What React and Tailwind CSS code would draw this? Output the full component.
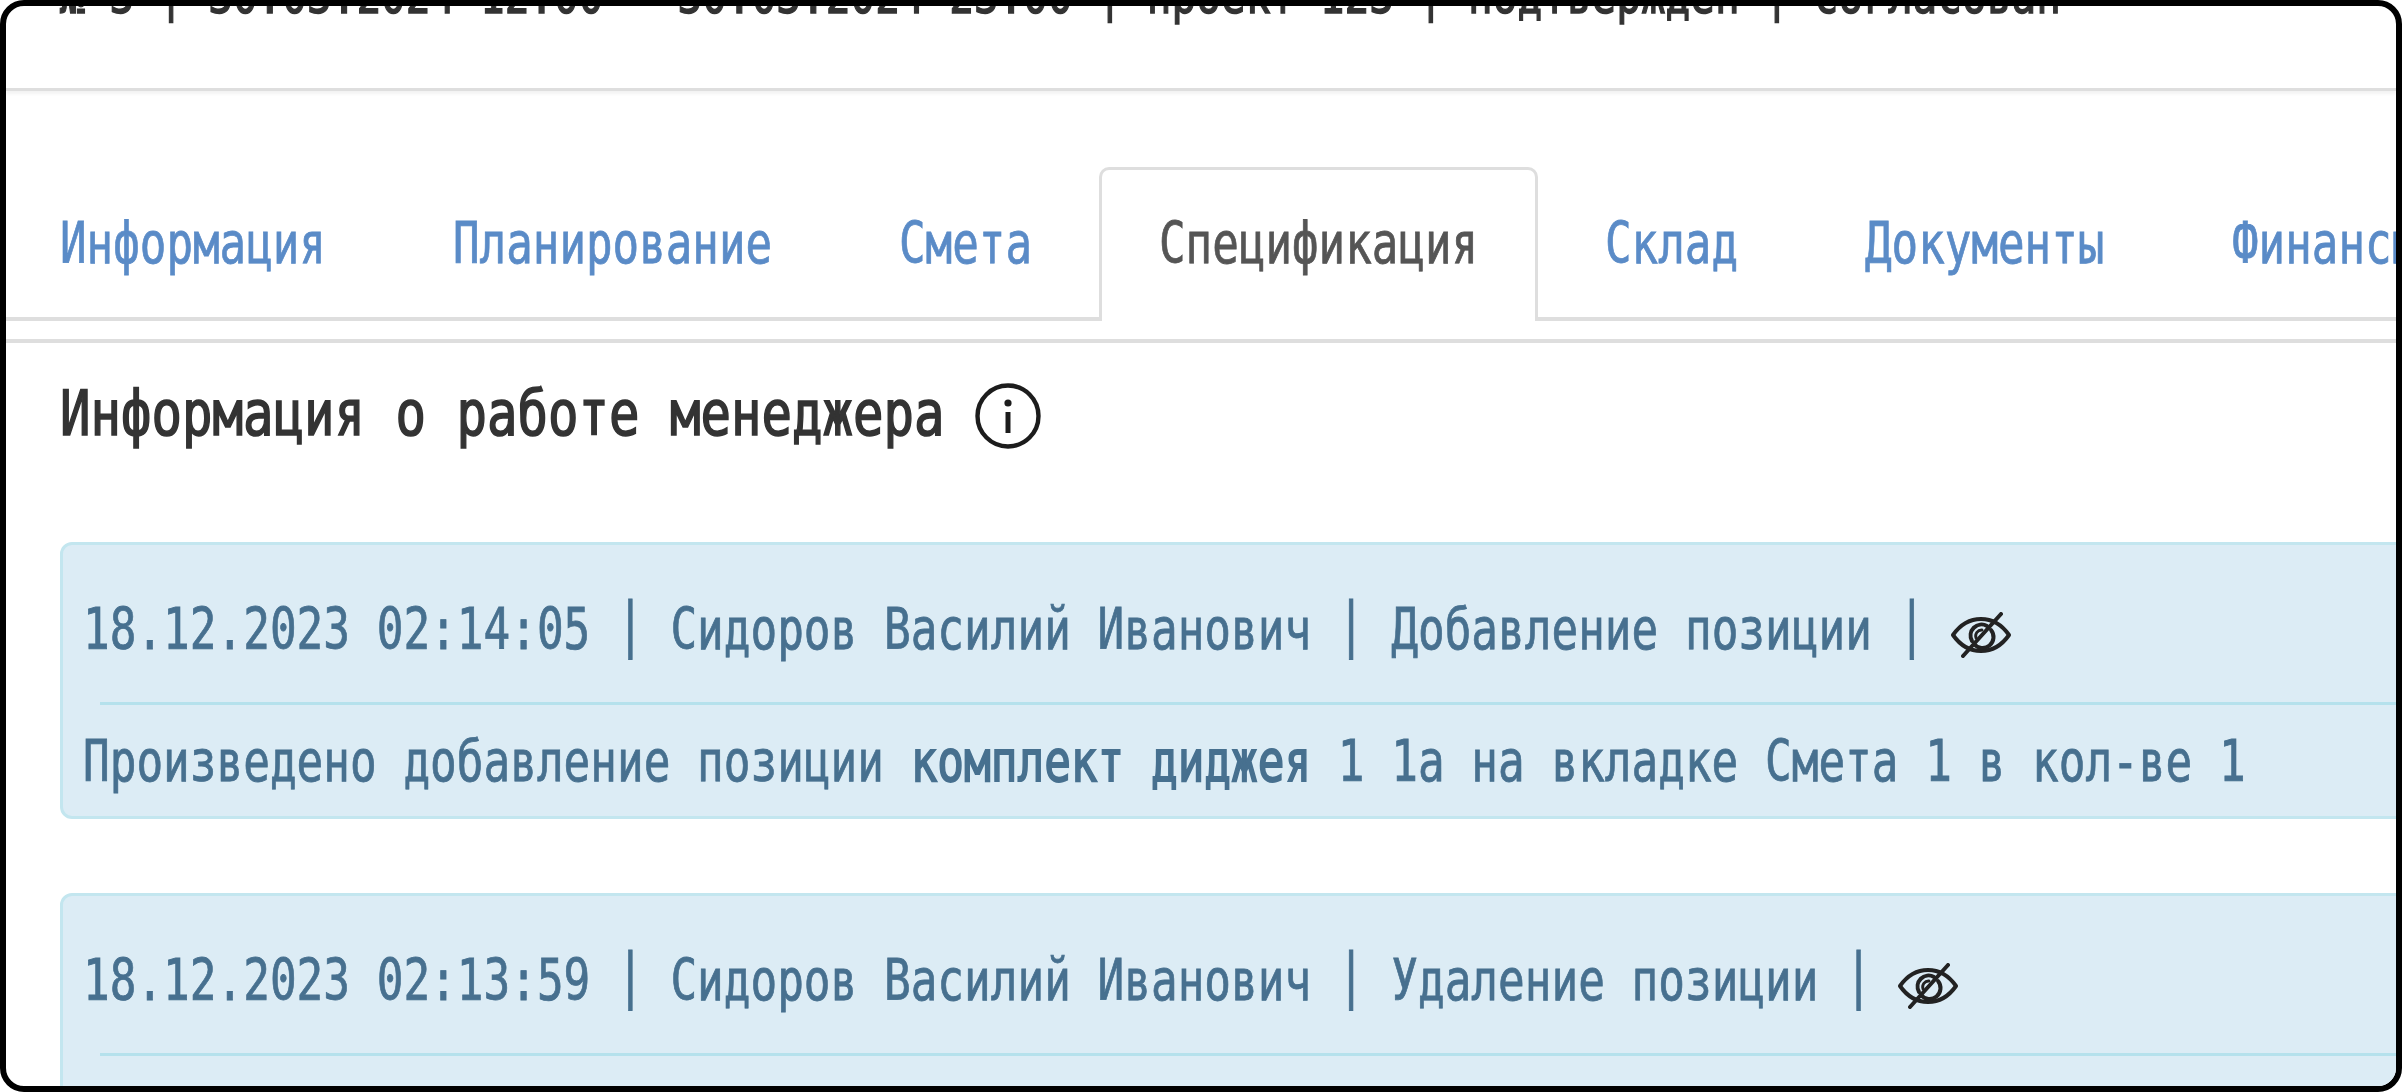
const tabs = ['Информация', 'Планирование', 'Смета', 'Спецификация', 'Склад', 'Документы', 'Финансы'];

const logs = [
  {
    date: '18.12.2023 02:14:05 | Сидоров Василий Иванович | Добавление позиции |',
    before: 'Произведено добавление позиции ',
    bold: 'комплект диджея',
    after: ' 1 1а на вкладке Смета 1 в кол-ве 1',
  },
  {
    // the second card runs off the bottom edge right below its divider
    date: '18.12.2023 02:13:59 | Сидоров Василий Иванович | Удаление позиции |',
  },
];

// the font in the picture is a narrow mono, so DejaVu Mono gets squeezed
// the outer span keeps the real width in the flow
function Narrow({ text, advance, className, children }) {
  return (
    <span className="inline-block shrink-0 whitespace-pre" style={{ width: text.length * advance }}>
      <span className={`inline-block origin-left whitespace-pre ${className}`}>{children || text}</span>
    </span>
  );
}

// the separators sit higher and run a bit longer than DejaVu's pipe
function withBars(text) {
  return text.split('|').map((part, i) => (
    <span key={i}>
      {i > 0 && <span className="inline-block -translate-y-[5px] scale-y-[1.06]">|</span>}
      {part}
    </span>
  ));
}

function InfoIcon() {
  return (
    <svg viewBox="0 0 66 66" className="h-[66px] w-[66px] shrink-0 text-[#1c1c1c]" fill="none" stroke="currentColor">
      <circle cx="33" cy="33" r="30.5" strokeWidth="4.4" />
      <circle cx="33" cy="20" r="3.6" fill="currentColor" stroke="none" />
      <path d="M33 29v21" strokeWidth="5" />
    </svg>
  );
}

function EyeOffIcon() {
  return (
    <svg viewBox="0 0 60 46" className="mt-[11px] h-[46px] w-[60px] shrink-0 text-[#222]" fill="none" stroke="currentColor" strokeWidth="4" strokeLinecap="round" strokeLinejoin="round">
      <path d="M2 23C9 13 19 7 30 7s21 6 28 16c-7 10-17 16-28 16S9 33 2 23z" />
      <path d="M36 14a11 11 0 0 0-15 15M23 32a11 11 0 0 0 17-14" />
      <path d="M31 18a6 6 0 0 0-6 8" strokeWidth="2.8" />
      <path d="M50 2L12 44" />
    </svg>
  );
}

function LogCard({ log }) {
  return (
    <div className={`mr-[-40px] rounded-[12px] border-[3px] border-[#c3e6ef] bg-[#dcecf5] pt-[56px] text-[#47708f] ${log.before ? 'pb-[26px]' : 'pb-[60px]'}`}>
      <div className="flex pl-[20px]">
        <Narrow text={log.date} advance={26.7} className="scale-x-[0.778] text-[57px] leading-[57px] [-webkit-text-stroke:0.8px_#47708f]">
          {withBars(log.date)}
        </Narrow>
        <span className="ml-[26px]"><EyeOffIcon /></span>
      </div>
      <div className="mt-[44px] ml-[37px] h-[3px] bg-[#b5e1ec]" />
      {log.before && (
        <div className="mt-[28px] pl-[20px]">
          <Narrow
            text={log.before + log.bold + log.after}
            advance={26.7}
            className="scale-x-[0.778] text-[57px] leading-[57px] [-webkit-text-stroke:0.8px_#47708f]"
          >
            {log.before}
            <span className="[-webkit-text-stroke:1.8px_#47708f]">{log.bold}</span>
            {log.after}
          </Narrow>
        </div>
      )}
    </div>
  );
}

const orderTitle = '№ 3 | 30.03.2024 12:00 - 30.03.2024 23:00 | проект 123 | подтвержден | согласован';

export default function App() {
  return (
    <div className="box-border h-screen w-screen overflow-hidden rounded-[24px] border-[6px] border-black bg-white font-['DejaVu_Sans_Mono',monospace]">
      {/* Order title, only its lower edge is still on screen */}
      <div className="flow-root h-[85px] border-b-[3px] border-[#dedede] shadow-[0_3px_3px_#f3f3f3]">
        <div className="-mt-[37px] pl-[54px] text-[#333]">
          <Narrow
            text={orderTitle}
            advance={24.7}
            className="scale-x-[0.789] text-[52px] leading-[52px] [-webkit-text-stroke:1.4px_#333]"
          >
            {withBars(orderTitle)}
          </Narrow>
        </div>
      </div>

      {/* Tabs */}
      <div className="mt-[76px] -ml-[6px] flex h-[154px] gap-[7px] border-b-[4px] border-[#dedede]">
        {tabs.map((tab) => (
          <div
            key={tab}
            className={
              tab === 'Спецификация'
                ? 'h-[154px] shrink-0 rounded-t-[10px] border-[3px] border-b-0 border-[#dedede] bg-white px-[57px] pt-[45px] text-[#555]'
                : 'h-[154px] shrink-0 rounded-t-[10px] border-[3px] border-b-0 border-transparent px-[57px] pt-[45px] text-[#5a8bc7]'
            }
          >
            <Narrow
              text={tab}
              advance={26.6}
              className={
                tab === 'Спецификация'
                  ? 'scale-x-[0.775] text-[57px] leading-[57px] [-webkit-text-stroke:0.8px_#555]'
                  : 'scale-x-[0.775] text-[57px] leading-[57px] [-webkit-text-stroke:0.8px_#5a8bc7]'
              }
            />
          </div>
        ))}
      </div>

      {/* Panel */}
      <div className="mt-[18px] border-t-[4px] border-[#dedede] pl-[54px]">
        <div className="mt-[40px] mb-[93px] flex gap-[30px] text-[#333]">
          <Narrow
            text="Информация о работе менеджера"
            advance={30.5}
            className="scale-x-[0.817] text-[62px] leading-[62px] [-webkit-text-stroke:1.6px_#333]"
          />
          <InfoIcon />
        </div>
        <div className="flex flex-col gap-[74px]">
          {logs.map((log) => (
            <LogCard key={log.date} log={log} />
          ))}
        </div>
      </div>
    </div>
  );
}
